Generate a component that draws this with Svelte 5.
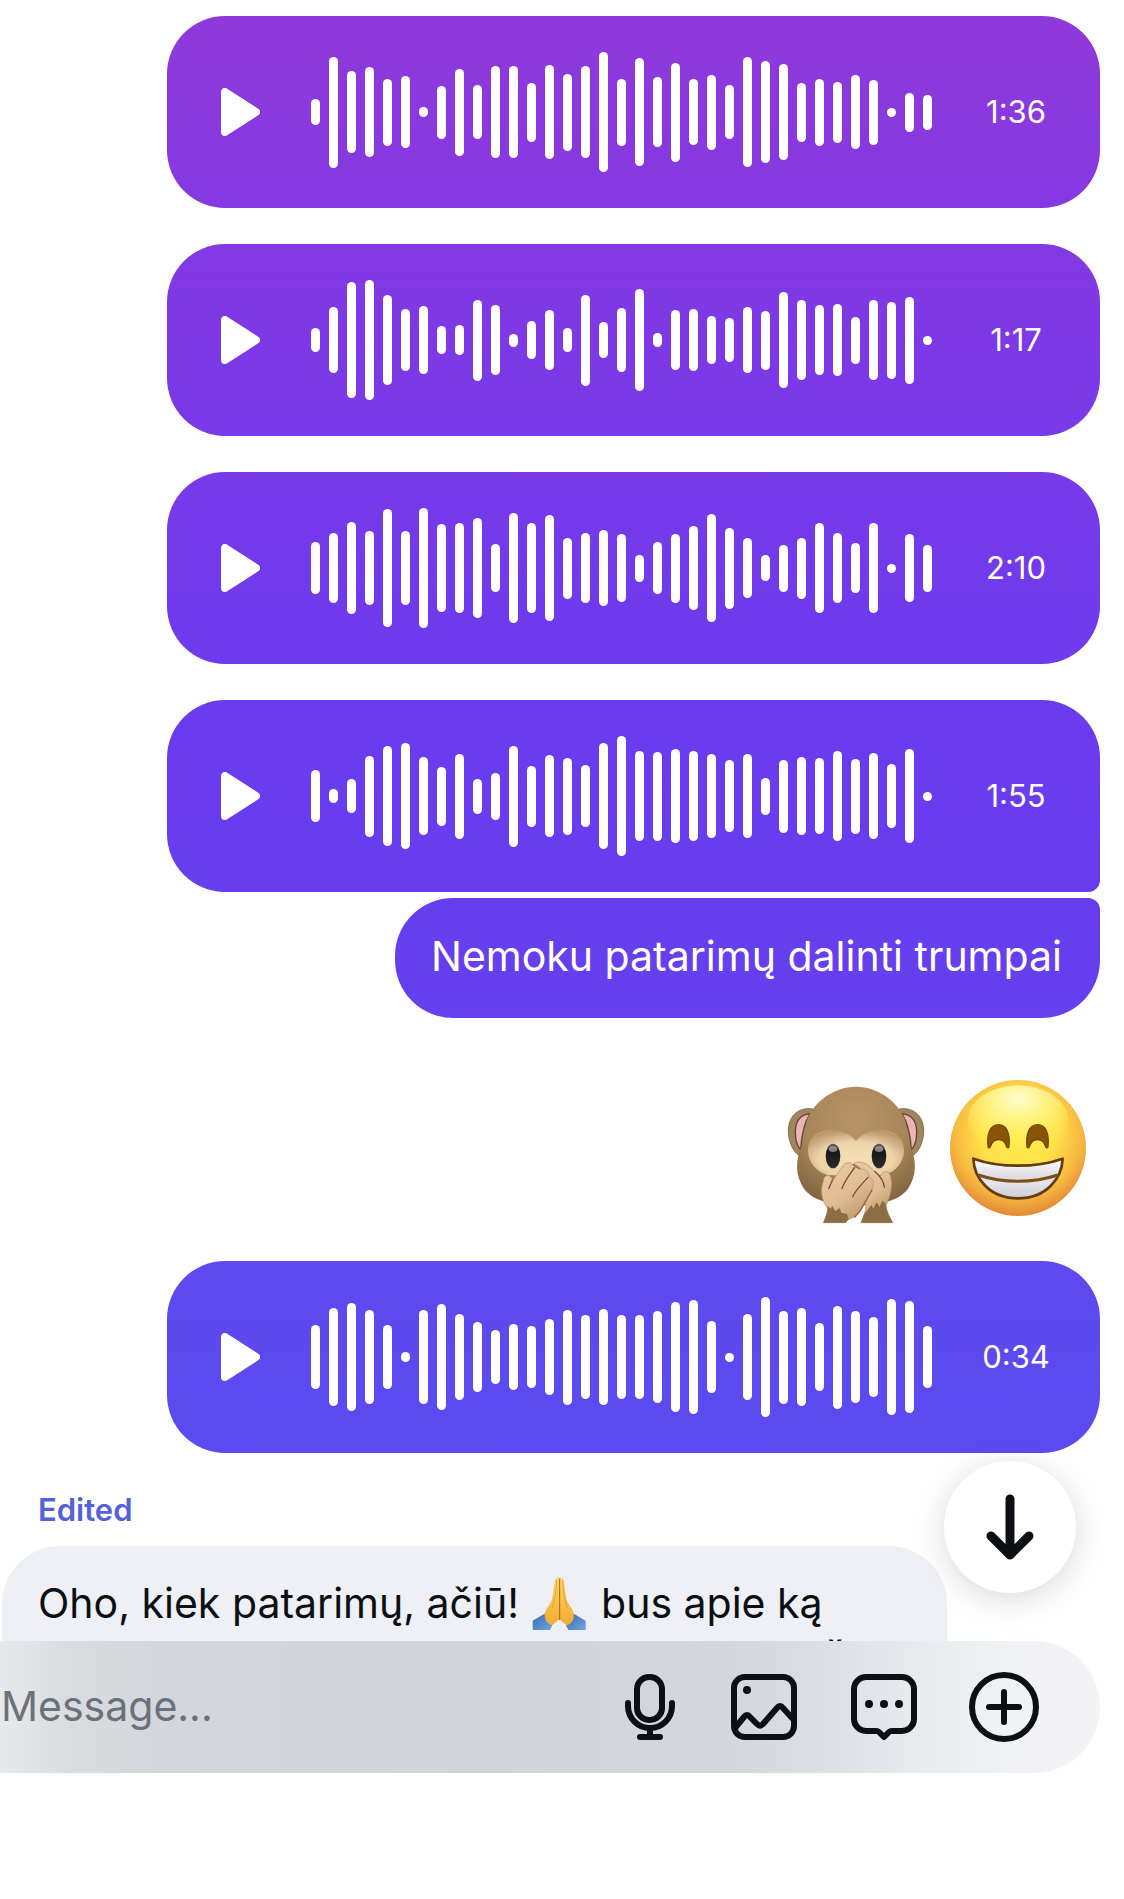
<script lang="ts">
  type Voice = { time: string; bars: number[]; joined?: boolean };

  const firstVoices: Voice[] = [
    {
      time: "1:36",
      bars: [26, 111, 82, 90, 67, 72, 10, 53, 87, 54, 92, 92, 59, 94, 77, 92, 120, 67, 108, 70, 99, 66, 75, 54, 110, 102, 96, 59, 67, 61, 74, 65, 9, 39, 35]
    },
    {
      time: "1:17",
      bars: [24, 66, 116, 120, 90, 62, 68, 28, 30, 81, 70, 13, 38, 60, 24, 91, 36, 64, 102, 14, 60, 62, 48, 44, 66, 59, 96, 80, 70, 72, 47, 80, 77, 87, 9]
    },
    {
      time: "2:10",
      bars: [52, 70, 92, 74, 118, 74, 120, 88, 90, 100, 48, 110, 90, 106, 61, 70, 76, 68, 27, 52, 69, 84, 108, 81, 60, 26, 47, 61, 90, 70, 50, 90, 9, 68, 47]
    },
    {
      time: "1:55",
      joined: true,
      bars: [52, 14, 34, 81, 100, 106, 78, 59, 85, 35, 47, 101, 61, 82, 77, 62, 106, 120, 90, 89, 94, 90, 84, 72, 84, 37, 73, 78, 76, 90, 75, 86, 64, 94, 9]
    }
  ];

  const lastVoice: Voice = {
    time: "0:34",
    bars: [64, 98, 108, 94, 64, 10, 94, 106, 86, 70, 54, 66, 62, 76, 95, 84, 96, 84, 84, 92, 110, 114, 72, 9, 86, 120, 93, 98, 68, 103, 92, 80, 116, 112, 62]
  };

  let message = $state("");
</script>

{#snippet voice(item: Voice)}
  <div class="bubble voice" class:joined={item.joined}>
    <button class="play" aria-label="Play">
      <svg viewBox="0 0 39 48">
        <path d="M4 4V44L35 24Z" />
      </svg>
    </button>
    <div class="wave">
      {#each item.bars as bar}
        <span class="bar" style="height: {bar}px"></span>
      {/each}
    </div>
    <span class="time">{item.time}</span>
  </div>
{/snippet}

<main class="chat">
  <div class="thread">
    <div class="messages">
      {#each firstVoices as item}
        {@render voice(item)}
      {/each}
      <p class="bubble text">Nemoku patarimų dalinti trumpai</p>

      <div class="emojis">
        <!-- speak-no-evil monkey -->
        <svg viewBox="72 60 432 432" role="img" aria-label="🙊">
          <defs>
            <radialGradient id="fur" cx="50%" cy="28%" r="75%">
              <stop offset="0" stop-color="#b8946a" />
              <stop offset="0.6" stop-color="#a88558" />
              <stop offset="1" stop-color="#80643e" />
            </radialGradient>
            <radialGradient id="mask" cx="50%" cy="65%" r="65%">
              <stop offset="0" stop-color="#f6dfb8" />
              <stop offset="0.6" stop-color="#ecd3a8" />
              <stop offset="1" stop-color="#bc9a70" />
            </radialGradient>
            <linearGradient id="hand" x1="0" y1="0" x2="0.6" y2="1">
              <stop offset="0" stop-color="#ebcca6" />
              <stop offset="0.6" stop-color="#dfbd94" />
              <stop offset="1" stop-color="#bf976f" />
            </linearGradient>
            <linearGradient id="eye" x1="0" y1="0" x2="0" y2="1">
              <stop offset="0" stop-color="#666" />
              <stop offset="0.3" stop-color="#151515" />
              <stop offset="1" stop-color="#2d2d30" />
            </linearGradient>
          </defs>
          <path d="M158 147C112 140 84 172 85 215C86 252 104 282 124 290L160 210Z" fill="#a3855c" stroke="#8a6e4a" stroke-width="3" />
          <path d="M418 147C464 140 492 172 491 215C490 252 472 282 452 290L416 210Z" fill="#a3855c" stroke="#8a6e4a" stroke-width="3" />
          <path d="M150 161C120 165 106 186 106 216C106 242 113 260 122 270C124 230 132 190 150 161Z" fill="#efb3b5" stroke="#604838" stroke-width="4" />
          <path d="M426 161C456 165 470 186 470 216C470 242 463 260 454 270C452 230 444 190 426 161Z" fill="#efb3b5" stroke="#604838" stroke-width="4" />
          <path d="M288 80C220 80 160 128 142 178C134 206 138 232 126 258C105 300 106 348 132 386C160 424 220 436 288 436C356 436 416 424 444 386C470 348 471 300 450 258C438 232 442 206 434 178C416 128 356 80 288 80Z" fill="url(#fur)" />
          <path d="M288 243C268 218 240 209 207 210C170 211 143 236 144 272C145 308 170 335 204 346H372C406 335 431 308 432 272C433 236 406 211 369 210C336 209 308 218 288 243Z" fill="url(#mask)" />
          <ellipse cx="219" cy="288" rx="22" ry="37" fill="url(#eye)" />
          <ellipse cx="357" cy="288" rx="22" ry="37" fill="url(#eye)" />
          <ellipse cx="219" cy="267" rx="13" ry="9" fill="#aaa" opacity="0.7" />
          <ellipse cx="357" cy="267" rx="13" ry="9" fill="#aaa" opacity="0.7" />
          <path d="M282 310C300 300 322 310 342 332C354 346 362 354 364 342C374 330 388 332 392 350C398 376 394 402 378 436C380 456 390 472 398 488H304C310 470 316 455 318 440Z" fill="url(#hand)" stroke="#b58c64" stroke-width="2" />
          <path d="M190 488C200 466 204 452 202 444C184 420 180 390 190 364C190 346 206 342 214 352L218 362L250 316C260 304 276 308 280 316C290 312 300 318 300 326C314 326 326 336 326 348C342 358 344 374 336 388L308 438C298 460 280 474 262 480L252 488Z" fill="url(#hand)" stroke="#b58c64" stroke-width="2" />
          <path d="M190 488C200 466 204 450 203 436L211 446L217 438L226 454L239 444L244 458L261 462L266 478L258 488Z" fill="#8c6e44" />
          <path d="M312 464L334 434L340 446L349 427L359 440L367 422L378 432C378 456 390 472 398 488H302Z" fill="#8c6e44" />
          <path d="M217 361L206 386M284 322C270 344 254 360 246 386M324 352C304 374 288 388 278 410M344 334C362 350 372 366 373 382" fill="none" stroke="#7c4c2e" stroke-width="4" stroke-linecap="round" />
          <path d="M336 390L308 440C300 456 292 464 284 472M280 314L298 326" fill="none" stroke="#96683f" stroke-width="4" stroke-linecap="round" />
        </svg>

        <!-- grinning face with smiling eyes -->
        <svg viewBox="558 60 432 432" role="img" aria-label="😁">
          <defs>
            <radialGradient id="face" gradientUnits="userSpaceOnUse" cx="774" cy="220" r="255">
              <stop offset="0" stop-color="#ffee4c" />
              <stop offset="0.45" stop-color="#ffe04a" />
              <stop offset="0.75" stop-color="#f7b840" />
              <stop offset="1" stop-color="#e08434" />
            </radialGradient>
            <radialGradient id="shine" cx="50%" cy="20%" r="75%">
              <stop offset="0" stop-color="#fffcd4" />
              <stop offset="0.45" stop-color="#fff98e" stop-opacity="0.7" />
              <stop offset="1" stop-color="#fff04e" stop-opacity="0" />
            </radialGradient>
            <linearGradient id="teeth" x1="0" y1="0" x2="0" y2="1">
              <stop offset="0" stop-color="#fff" />
              <stop offset="0.45" stop-color="#dcdce2" />
              <stop offset="0.6" stop-color="#e4e4ea" />
              <stop offset="1" stop-color="#cdcdd6" />
            </linearGradient>
          </defs>
          <circle cx="774" cy="264" r="204" fill="url(#face)" />
          <ellipse cx="774" cy="180" rx="150" ry="104" fill="url(#shine)" />
          <path d="M684 260C680 222 690 194 716 194C741 194 751 222 747 260C745 266 741 264 739 258C732 232 700 232 692 258C690 264 686 266 684 260Z" fill="#8a5407" stroke="#75470b" stroke-width="4" />
          <path d="M801 260C797 222 807 194 833 194C858 194 868 222 864 260C862 266 858 264 856 258C849 232 817 232 809 258C807 264 803 266 801 260Z" fill="#8a5407" stroke="#75470b" stroke-width="4" />
          <path d="M640 296C720 324 828 324 908 296C906 352 862 415 774 415C686 415 642 352 640 296Z" fill="url(#teeth)" stroke="#633c10" stroke-width="8" stroke-linejoin="round" />
          <path d="M655 345C728 370 820 370 893 345" fill="none" stroke="#7d4d19" stroke-width="9" />
        </svg>
      </div>

      {@render voice(lastVoice)}

      <span class="edited">Edited</span>
      <div class="bubble incoming">
        <p>
          Oho, kiek patarimų, ačiū!
          <svg class="pray" viewBox="94 51 162 159" role="img" aria-label="🙏">
            <defs>
              <linearGradient id="palm" x1="0" y1="0" x2="0" y2="1">
                <stop offset="0" stop-color="#ffd968" />
                <stop offset="1" stop-color="#f3a92f" />
              </linearGradient>
              <linearGradient id="sleeve" x1="0" y1="0" x2="1" y2="1">
                <stop offset="0" stop-color="#3a68a8" />
                <stop offset="1" stop-color="#6fa5e6" />
              </linearGradient>
            </defs>
            <path d="M96 182L134 160C148 164 158 182 154 198L148 210H96Z" fill="url(#sleeve)" />
            <path d="M255 182L217 160C203 164 193 182 197 198L203 210H255Z" fill="url(#sleeve)" />
            <path d="M176 53C168 51 163 55 162 64L156 108C154 130 134 146 132 164C133 182 141 192 154 196C162 190 169 183 176 178Z" fill="url(#palm)" />
            <path d="M176 53C184 51 189 55 190 64L196 108C198 130 218 146 220 164C219 182 211 192 198 196C190 190 183 183 176 178Z" fill="url(#palm)" />
            <path d="M177 56V180" fill="none" stroke="#a8641c" stroke-width="3" />
            <path d="M168 60C167 90 163 120 154 144M186 60C187 90 191 120 200 144" fill="none" stroke="#d98e28" stroke-width="2" />
          </svg>
          bus apie ką
        </p>
        <p class="next">Š</p>
      </div>
    </div>

    <button class="to-bottom" aria-label="Scroll to latest">
      <svg viewBox="0 0 66 72">
        <path d="M33 8V63M14 45L33 64L52 45" />
      </svg>
    </button>
  </div>

  <form class="composer" onsubmit={(e) => e.preventDefault()}>
    <input type="text" placeholder="Message..." aria-label="Message" bind:value={message} />
    <div class="tools">
      <button type="button" aria-label="Record voice">
        <svg class="mic" viewBox="0 0 60 72">
          <rect x="17" y="6" width="25" height="43" rx="12" />
          <path d="M8 32V35A22 22 0 0 0 52 35V32M30 57V66M20 66H40" />
        </svg>
      </button>
      <button type="button" aria-label="Add photo">
        <svg viewBox="0 0 72 72">
          <rect x="6" y="6" width="60" height="60" rx="11" />
          <path d="M7 57L16 46Q19 42 22 46L29 53Q32 56 35 53L49 37Q52 33 55 37L65 48" />
          <circle class="dot" cx="19" cy="19" r="4" />
        </svg>
      </button>
      <button type="button" aria-label="Quick reply">
        <svg viewBox="0 0 72 72">
          <path d="M18 6H54A12 12 0 0 1 66 18V48A12 12 0 0 1 54 60H44Q42 60 41 61L36 66L31 61Q30 60 28 60H18A12 12 0 0 1 6 48V18A12 12 0 0 1 18 6Z" />
          <circle class="dot" cx="21" cy="33" r="4" />
          <circle class="dot" cx="36" cy="33" r="4" />
          <circle class="dot" cx="51" cy="33" r="4" />
        </svg>
      </button>
      <button type="button" aria-label="More">
        <svg viewBox="0 0 72 72">
          <circle cx="36" cy="36" r="32" />
          <path d="M21 36H51M36 21V51" />
        </svg>
      </button>
    </div>
  </form>
</main>

<style>
  .chat {
    height: 100vh;
    display: flex;
    flex-direction: column;
    box-sizing: border-box;
    padding-bottom: 126px;
    background: #fefefe;
    color: #0c1014;
    font-family: Inter, "Liberation Sans", sans-serif;
    font-size: 41px;
    line-height: 52px;
  }

  p {
    margin: 0;
  }

  button {
    border: none;
    padding: 0;
    background: none;
    cursor: pointer;
  }

  svg {
    display: block;
  }

  .thread {
    position: relative;
    flex: 1;
    min-height: 0;
  }

  .messages {
    display: flex;
    flex-direction: column;
    align-items: flex-end;
    height: 100%;
    box-sizing: border-box;
    overflow: hidden;
    padding: 16px 24px 0 2px;
  }

  .bubble {
    flex-shrink: 0;
    box-sizing: border-box;
    border-radius: 58px;
    color: #fff;
    background: linear-gradient(#9039da 0%, #8239e2 13%, #7939e8 23%, #6b3bee 37%, #653fee 52%, #5e49ee 67%, #584cf0 80%) fixed;
  }

  .voice {
    display: flex;
    align-items: center;
    width: 933px;
    max-width: 100%;
    height: 192px;
    margin-bottom: 36px;
    padding-left: 54px;
  }

  .voice.joined {
    margin-bottom: 6px;
    border-bottom-right-radius: 12px;
  }

  .play {
    margin-right: 51px;
  }

  .play svg {
    width: 39px;
    height: 48px;
    fill: #fff;
    stroke: #fff;
    stroke-width: 8;
    stroke-linejoin: round;
  }

  .wave {
    display: flex;
    align-items: center;
    gap: 9px;
    height: 120px;
  }

  .bar {
    width: 9px;
    border-radius: 5px;
    background: #fff;
  }

  .time {
    flex: 1;
    text-align: center;
    font-size: 31px;
    line-height: 40px;
  }

  .text {
    padding: 32px 38px 36px 36px;
    border-top-right-radius: 12px;
  }

  .emojis {
    display: flex;
    gap: 18px;
    padding: 62px 10px 37px;
  }

  .emojis svg {
    width: 144px;
    height: 144px;
  }

  .edited {
    align-self: flex-start;
    padding: 1px 36px 16px;
    color: #5561d8;
    font-size: 31px;
    font-weight: 600;
    line-height: 40px;
  }

  .incoming {
    align-self: flex-start;
    width: 945px;
    max-width: 100%;
    padding: 27px 36px 36px;
    background: #eff0f5;
    color: #0c1014;
    line-height: 60px;
  }

  .pray {
    display: inline-block;
    width: 54px;
    height: 53px;
    margin: 0 4px 0 1px;
    vertical-align: -12px;
  }

  .next {
    padding-left: 784px;
  }

  .to-bottom {
    position: absolute;
    right: 48px;
    bottom: 48px;
    display: flex;
    align-items: center;
    justify-content: center;
    width: 132px;
    height: 132px;
    border-radius: 50%;
    background: #fff;
    box-shadow: 0 6px 30px rgba(0, 0, 0, 0.14);
  }

  .to-bottom svg {
    width: 66px;
    height: 72px;
    fill: none;
    stroke: #0c1014;
    stroke-width: 9;
    stroke-linecap: round;
    stroke-linejoin: round;
  }

  .composer {
    display: flex;
    align-items: center;
    height: 132px;
    margin-right: 24px;
    padding-right: 60px;
    border-radius: 0 66px 66px 0;
    background: linear-gradient(90deg, #e8e9eb 0%, #dadde0 6%, #d3d6da 15%, #d1d4d9 45%, #d4d7db 67%, #dde1e5 76%, #e8eaee 83%, #f1f2f3 92%, #f4f4f6 100%);
  }

  .composer input {
    flex: 1;
    min-width: 0;
    border: none;
    outline: none;
    padding: 0 0 2px 1px;
    background: none;
    color: #0c1014;
    font: inherit;
  }

  .composer input::placeholder {
    color: #6b7179;
    opacity: 1;
  }

  .tools {
    display: flex;
    gap: 48px;
  }

  .tools svg {
    width: 72px;
    height: 72px;
    fill: none;
    stroke: #0c1014;
    stroke-width: 6;
    stroke-linecap: round;
    stroke-linejoin: round;
  }

  .tools .mic {
    width: 60px;
  }

  .tools .dot {
    fill: #0c1014;
    stroke: none;
  }
</style>
